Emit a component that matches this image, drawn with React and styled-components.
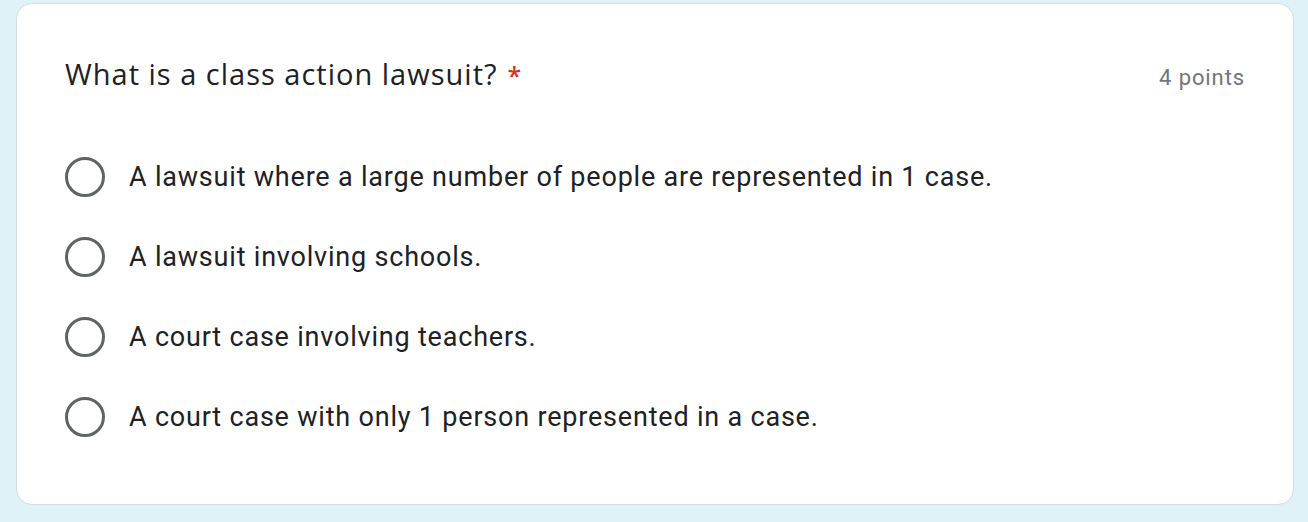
import React from 'react';
import styled, {createGlobalStyle} from 'styled-components';

const Global = createGlobalStyle`
  html, body {
    margin: 0;
    padding: 0;
    background: #dff2f8;
  }
  body {
    font-family: Roboto, "Liberation Sans", sans-serif;
  }
`;

const Page = styled.div`
  padding: 3px 14px 16px 16px;
  box-sizing: border-box;
  width: 1308px;
  height: 522px;
`;

const Card = styled.div`
  background: #fff;
  border: 1.5px solid #d3dde2;
  border-radius: 16px;
  height: 502px;
  box-sizing: border-box;
  padding: 50px 48px 0 48px;
`;

const Header = styled.div`
  display: flex;
  justify-content: space-between;
  align-items: baseline;
  margin-bottom: 64px;
`;

const Title = styled.div`
  font-family: "Open Sans", Roboto, sans-serif;
  font-size: 29px;
  color: #202124;
  letter-spacing: 1px;
`;

const Star = styled.span`
  color: #d93025;
  margin-left: 10px;
  font-size: 25px;
  font-weight: 600;
`;

const Points = styled.div`
  font-size: 22px;
  color: #70757a;
  letter-spacing: 0.9px;
`;

const Options = styled.div`
  display: flex;
  flex-direction: column;
  gap: 40px;
`;

const Option = styled.label`
  display: flex;
  align-items: center;
  gap: 24px;
  height: 40px;
  font-size: 27px;
  letter-spacing: 0.8px;
  color: #202124;
`;

const Radio = styled.span`
  width: 40px;
  height: 40px;
  box-sizing: border-box;
  border: 3.5px solid #5f6368;
  border-radius: 50%;
  flex-shrink: 0;
`;

const options = [
  'A lawsuit where a large number of people are represented in 1 case.',
  'A lawsuit involving schools.',
  'A court case involving teachers.',
  'A court case with only 1 person represented in a case.',
];

export default function App() {
  return (
    <Page>
      <Global />
      <Card>
        <Header>
          <Title>
            What is a class action lawsuit?<Star>*</Star>
          </Title>
          <Points>4 points</Points>
        </Header>
        <Options>
          {options.map((o) => (
            <Option key={o}>
              <Radio />
              {o}
            </Option>
          ))}
        </Options>
      </Card>
    </Page>
  );
}
